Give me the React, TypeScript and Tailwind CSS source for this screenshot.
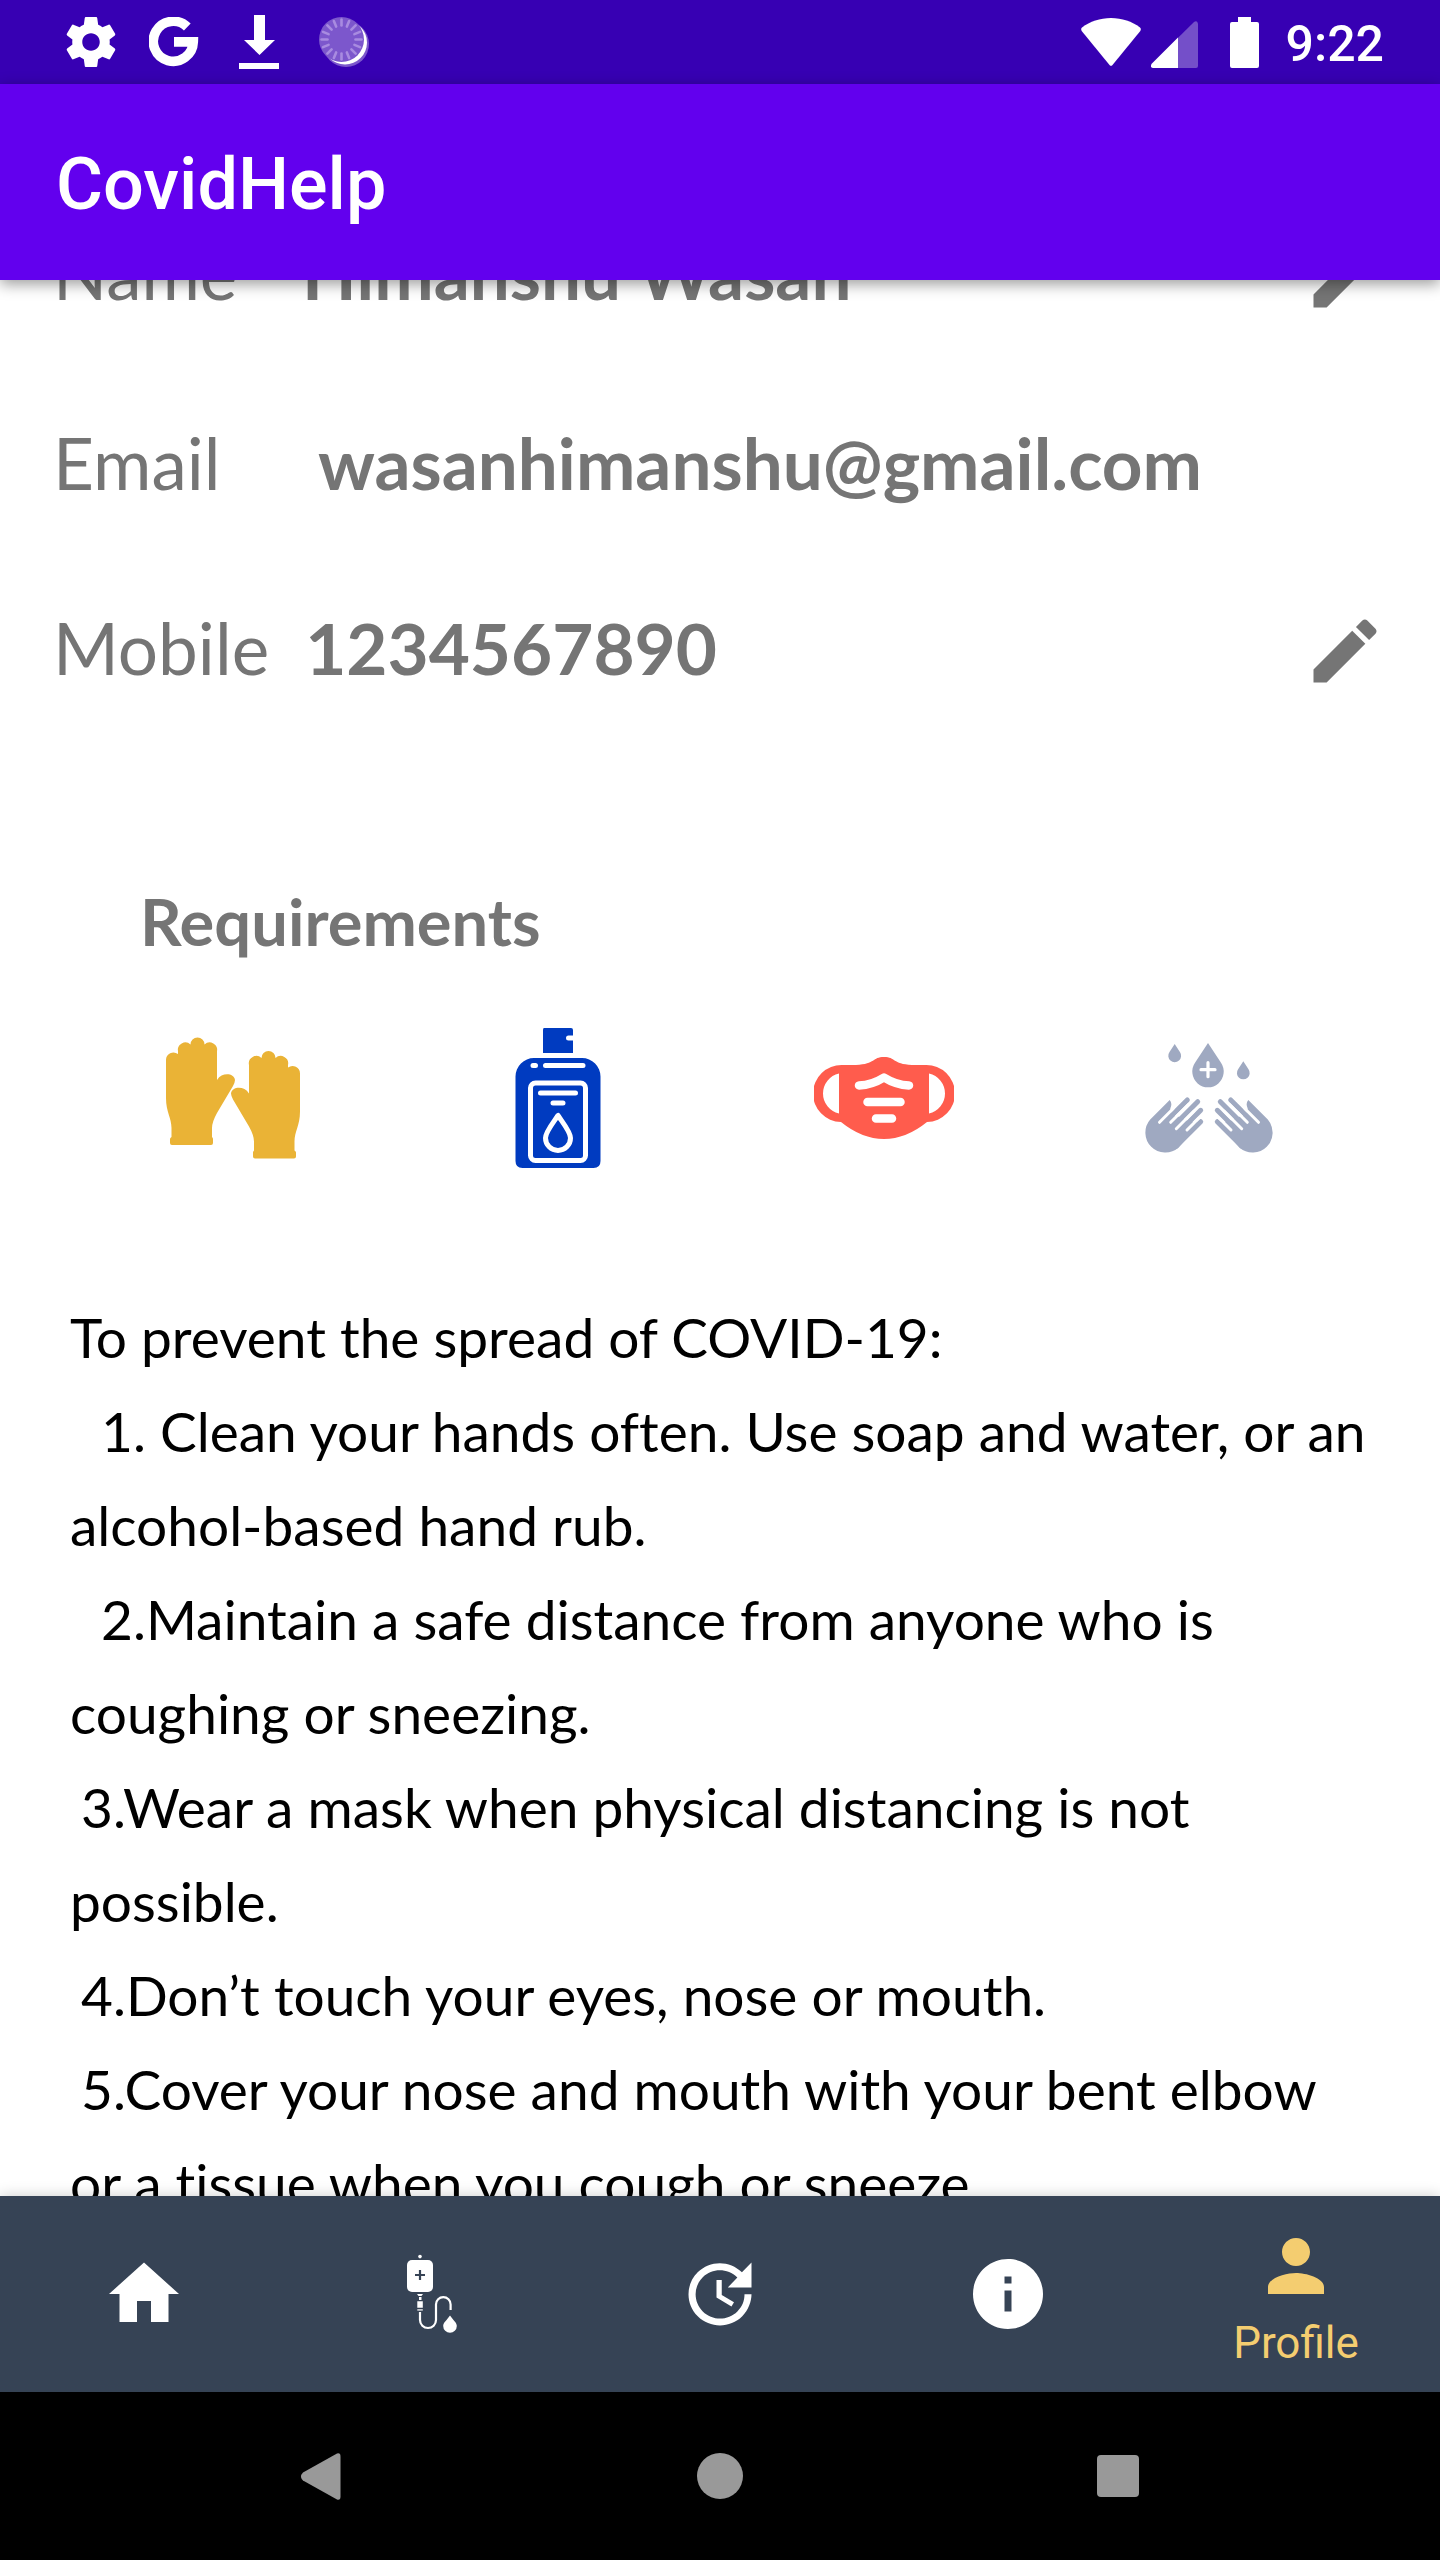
import React from "react";

type IconProps = { className?: string };

const material = (d: string) =>
  function Icon({ className }: IconProps) {
    return (
      <svg viewBox="0 0 24 24" fill="currentColor" aria-hidden="true" className={className}>
        <path d={d} />
      </svg>
    );
  };

const GearIcon = material(
  "M19.43 12.98c.04-.32.07-.64.07-.98s-.03-.66-.07-.98l2.11-1.65c.19-.15.24-.42.12-.64l-2-3.46c-.12-.22-.39-.3-.61-.22l-2.49 1c-.52-.4-1.08-.73-1.69-.98l-.38-2.65C14.46 2.18 14.25 2 14 2h-4c-.25 0-.46.18-.49.42l-.38 2.65c-.61.25-1.17.59-1.69.98l-2.49-1c-.23-.09-.49 0-.61.22l-2 3.46c-.13.22-.07.49.12.64l2.11 1.65c-.04.32-.07.65-.07.98s.03.66.07.98l-2.11 1.65c-.19.15-.24.42-.12.64l2 3.46c.12.22.39.3.61.22l2.49-1c.52.4 1.08.73 1.69.98l.38 2.65c.03.24.24.42.49.42h4c.25 0 .46-.18.49-.42l.38-2.65c.61-.25 1.17-.59 1.69-.98l2.49 1c.23.09.49 0 .61-.22l2-3.46c.12-.22.07-.49-.12-.64l-2.11-1.65zM12 15.5c-1.93 0-3.5-1.57-3.5-3.5s1.57-3.5 3.5-3.5 3.5 1.57 3.5 3.5-1.57 3.5-3.5 3.5z",
);
const PencilIcon = material(
  "M3 17.25V21h3.75L17.81 9.94l-3.75-3.75L3 17.25zM20.71 7.04c.39-.39.39-1.02 0-1.41l-2.34-2.34c-.39-.39-1.02-.39-1.41 0l-1.83 1.83 3.75 3.75 1.83-1.83z",
);
const HomeIcon = material("M10 20v-6h4v6h5v-8h3L12 3 2 12h3v8z");
const UpdateIcon = material(
  "M21 10.12h-6.78l2.74-2.82c-2.73-2.7-7.15-2.8-9.88-.1-2.73 2.71-2.73 7.08 0 9.79s7.15 2.71 9.88 0C18.32 15.65 19 14.08 19 12.1h2c0 1.98-.88 4.55-2.64 6.29-3.51 3.48-9.21 3.48-12.72 0-3.5-3.47-3.53-9.11-.02-12.58s9.14-3.47 12.65 0L21 3v7.12zM12.5 8v4.25l3.5 2.08-.72 1.21L11 13V8h1.5z",
);
const InfoIcon = material(
  "M12 2C6.48 2 2 6.48 2 12s4.48 10 10 10 10-4.48 10-10S17.52 2 12 2zm1 15h-2v-6h2v6zm0-8h-2V7h2v2z",
);
const PersonIcon = material(
  "M12 12c2.21 0 4-1.79 4-4s-1.79-4-4-4-4 1.79-4 4 1.79 4 4 4zm0 2c-2.67 0-8 1.34-8 4v2h16v-2c0-2.66-5.33-4-8-4z",
);

function GoogleIcon({ className }: IconProps) {
  return (
    <svg viewBox="0 0 50 50" fill="none" aria-hidden="true" className={className}>
      <path d="M38.3 10 A20 20 0 1 0 44.3 24.9 H25" stroke="white" strokeWidth="9.6" />
    </svg>
  );
}

function DownloadIcon({ className }: IconProps) {
  return (
    <svg viewBox="0 0 40 54" fill="white" aria-hidden="true" className={className}>
      <path d="M15 0h11v25h10L20.500 40 5 25h10zM0 48h40v6H0z" />
    </svg>
  );
}

function SpinnerIcon({ className }: IconProps) {
  const ticks = Array.from({ length: 16 }, (_, i) => i * 22.5);
  return (
    <svg viewBox="0 0 50 50" aria-hidden="true" className={className}>
      <circle cx="27" cy="27" r="23" fill="#7C57CC" />
      <circle cx="26" cy="25.500" r="22" fill="white" />
      <circle cx="22.500" cy="22.500" r="22.500" fill="#7C57CC" />
      {ticks.map((angle) => (
        <path
          key={angle}
          d="M22.500 2.500v6"
          stroke="#A88BE0"
          strokeWidth="2.600"
          strokeLinecap="round"
          transform={`rotate(${angle} 22.500 22.500)`}
        />
      ))}
    </svg>
  );
}

function WifiIcon({ className }: IconProps) {
  return (
    <svg viewBox="0 0 60 48" fill="white" aria-hidden="true" className={className}>
      <path d="M1 9.500C9 3.500 19 0 30 0s21 3.500 29 9.500q1.500 1.500.3 3.500L31.500 47q-1.500 1.700-3 0L.7 13Q-.5 11 1 9.500z" />
    </svg>
  );
}

function SignalIcon({ className }: IconProps) {
  return (
    <svg viewBox="0 -4 47 51" aria-hidden="true" className={className}>
      <path d="M2 47q-3.500-1-1-4.500L43 1q3-2 4 1.500V45q0 2-2 2z" fill="#744FC9" />
      <path d="M2 47q-3.500-1-1-4.500L27 16.500V47z" fill="white" />
    </svg>
  );
}

function BatteryIcon({ className }: IconProps) {
  return (
    <svg viewBox="0 0 29 51" fill="white" aria-hidden="true" className={className}>
      <path d="M8 0h13v5h6q2 0 2 2v42q0 2-2 2H2q-2 0-2-2V7q0-2 2-2h6z" />
    </svg>
  );
}

function GlovesIcon({ className }: IconProps) {
  return (
    <svg viewBox="0 8 140 140" fill="#EAB336" aria-hidden="true" className={className}>
      <path d="M3 40a7.500 7.500 0 0 1 12-6V31.500a7.500 7.500 0 0 1 12.500-7a7 7 0 0 1 14 0A7.500 7.500 0 0 1 54 31.500V60C59 52 71 53 72 60Q72 62 70 66L54 93Q49 102 49 108V117Q50 118 50 119V123Q50 125 48 125H9Q7 125 7 123V119Q7 118 8.500 117V108C8.500 98 3 92 3 78z" />
      <path d="M137 53.500a7.500 7.500 0 0 0-12-6V45a7.500 7.500 0 0 0-12.500-7a7 7 0 0 0-14 0A7.500 7.500 0 0 0 86 45V73.500C81 65.500 69 66.500 68 73.500Q68 75.500 70 79.500L86 106.500Q91 115.500 91 121.500V130.500Q90 131.500 90 132.500V136.500Q90 138.500 92 138.500H131Q133 138.500 133 136.500V132.500Q133 131.500 131.500 130.500V121.500C131.500 111.500 137 105.500 137 91.500z" />
    </svg>
  );
}

function SanitizerIcon({ className }: IconProps) {
  return (
    <svg viewBox="-13 0 140 140" aria-hidden="true" className={className}>
      <g fill="#003BC0">
        <path d="M43 0H70Q72 0 72 2V7.500H67.500a2.500 2.500 0 0 0 0 5H72V25H42V2Q42 0 43 0z" />
        <path d="M33 30H81A18.500 18.500 0 0 1 99.500 48.500V133Q99.500 140 92.500 140H21.500Q14.500 140 14.500 133V48.500A18.500 18.500 0 0 1 33 30z" />
      </g>
      <g fill="none" stroke="white" strokeWidth="5" strokeLinecap="round" strokeLinejoin="round">
        <path d="M32 37.500h2.500M44.500 37.500H82M39.500 65H74.500M52 75H62" />
        <rect x="29.500" y="55" width="55" height="77.500" rx="5" />
        <path d="M57 87.500C52 95 44.500 104 44.500 110a12.500 12.500 0 0 0 25 0C69.500 104 62 95 57 87.500z" />
      </g>
    </svg>
  );
}

function MaskIcon({ className }: IconProps) {
  return (
    <svg viewBox="0 0 140 140" aria-hidden="true" className={className}>
      <path
        fill="#FF5C4D"
        d="M28 37H42C62 36 58 29 70 29S78 36 98 37H112A28.500 28.500 0 0 1 113 94Q92 111 70 111T27 94A28.500 28.500 0 0 1 28 37z"
      />
      <path fill="white" d="M25 45.500V85.500A20.500 20.500 0 0 1 25 45.500zM115 45.500V85.500A20.500 20.500 0 0 0 115 45.500z" />
      <path
        fill="none"
        stroke="white"
        strokeWidth="8.500"
        strokeLinecap="round"
        strokeLinejoin="round"
        d="M45 57.500Q58 57 70 49.500Q82 57 95 57.500M53.500 74H86.500M62 90.500H78"
      />
    </svg>
  );
}

function WashHand() {
  return (
    <>
      <path
        fill="#9FA9C1"
        d="M11.200 76.600L30.700 57Q33.700 60.500 31.300 65.500L33 72L43 74.400L50 79L61.700 78.700L39.400 104.800A20 20 0 0 1 11.200 76.600z"
      />
      <path
        stroke="#9FA9C1"
        strokeWidth="5"
        strokeLinecap="round"
        d="M48.300 57L27 78.300M58.700 58.700L33 84.400M61.700 67.300L40 89M61.700 78.700L37.400 103"
      />
      <path
        stroke="white"
        strokeWidth="3"
        strokeLinecap="round"
        d="M20.500 79.300L34 65.800M31.700 79.300L50 61M37.300 85.700L55 68M48 87L60 75"
      />
    </>
  );
}

function WashIcon({ className }: IconProps) {
  return (
    <svg viewBox="0 -15 140 140" aria-hidden="true" className={className}>
      <g fill="#9FA9C1">
        <path d="M69 0L82 19.800A15.700 15.700 0 1 1 56 19.800z" />
        <path d="M35.700 1L40.900 9A6.400 6.400 0 1 1 30.500 9z" />
        <path d="M104.300 18.200L109.500 26.200A6.400 6.400 0 1 1 99.100 26.200z" />
      </g>
      <path d="M69 19.700v14M62 26.700h14" stroke="white" strokeWidth="3.200" strokeLinecap="round" />
      <WashHand />
      <g transform="matrix(-1 0 0 1 140 0)">
        <WashHand />
      </g>
    </svg>
  );
}

function DripIcon({ className }: IconProps) {
  return (
    <svg viewBox="0 0 84 84" aria-hidden="true" className={className}>
      <g fill="white">
        <circle cx="30" cy="4.600" r="1.800" />
        <rect x="17" y="8" width="26" height="32" rx="5" />
        <path d="M27 42h6l-1.500 2h-3zM29 45h2.500v3H29zM27.300 49.300h5.500v6.500h-5.500z" />
        <path d="M27.300 57h5.500v1.800h-5.500z" opacity="0.700" />
        <path d="M60 63.500c3 4.500 6.800 7 6.800 10.500a6.800 6.800 0 0 1-13.600 0c0-3.500 3.800-6 6.800-10.500z" />
      </g>
      <path d="M30 18v10M25 23h10" stroke="#364355" strokeWidth="2.200" />
      <path d="M30 60V68a8 8 0 0 0 16 0V52.500a7.300 7.300 0 0 1 14.600 0v5.500" stroke="white" strokeWidth="2.200" fill="none" />
    </svg>
  );
}

type RowProps = { label: string; value: string; editable?: boolean; first?: boolean };

function ProfileRow({ label, value, editable, first }: RowProps) {
  return (
    <div
      className={`flex h-[185px] items-center px-[53px] text-[71px] leading-[84px] text-[#757575] ${first ? "mb-[5px]" : ""}`}
    >
      <dt className="min-w-[249px] pr-9">{label}</dt>
      <dd className={editable ? "flex-1 font-bold" : "flex-1 pl-4 font-bold"}>{value}</dd>
      {editable && (
        <button type="button" aria-label={`Edit ${label}`} className="pt-1.5">
          <PencilIcon className="size-21" />
        </button>
      )}
    </div>
  );
}

const advice = [
  { indent: "indent-0", text: "To prevent the spread of COVID-19:" },
  { indent: "indent-[31px]", text: "1. Clean your hands often. Use soap and water, or an alcohol-based hand rub." },
  { indent: "indent-[31px]", text: "2.Maintain a safe distance from anyone who is coughing or sneezing." },
  { indent: "indent-[11px]", text: "3.Wear a mask when physical distancing is not possible." },
  { indent: "indent-[11px]", text: "4.Don’t touch your eyes, nose or mouth." },
  { indent: "indent-[11px]", text: "5.Cover your nose and mouth with your bent elbow or a tissue when you cough or sneeze." },
];

const tabs = [
  { name: "Home", Icon: HomeIcon },
  { name: "Blood", Icon: DripIcon },
  { name: "Updates", Icon: UpdateIcon },
  { name: "Info", Icon: InfoIcon },
];

export default function App() {
  return (
    <div className="flex h-screen flex-col overflow-hidden bg-white font-['Lato',sans-serif]">
      <div className="flex h-21 shrink-0 items-center justify-between bg-[#3700B3] pr-14 pl-[65px] text-white">
        <div className="flex items-center gap-8">
          <GearIcon className="-mx-1 size-[60px]" />
          <GoogleIcon className="size-[50px]" />
          <DownloadIcon className="mx-2 h-[54px] w-10" />
          <SpinnerIcon className="size-[50px]" />
        </div>
        <div className="flex items-center">
          <WifiIcon className="h-12 w-[60px]" />
          <SignalIcon className="ml-[10px] h-[51px] w-[47px]" />
          <BatteryIcon className="ml-8 h-[51px] w-[29px]" />
          <span className="ml-[27px] pt-1 font-['Roboto',sans-serif] text-[50px] leading-[60px] font-medium">9:22</span>
        </div>
      </div>

      <header className="z-10 flex h-49 shrink-0 items-center bg-[#6200EE] px-14 shadow-[0_4px_14px_rgba(0,0,0,0.4)]">
        <h1 className="pt-1.5 font-['Roboto',sans-serif] text-[72px] leading-[84px] font-medium text-white">CovidHelp</h1>
      </header>

      <main className="min-h-0 flex-1 overflow-hidden">
        <dl className="-mt-[100px]">
          <ProfileRow label="Name" value="Himanshu Wasan" editable first />
          <ProfileRow label="Email" value="wasanhimanshu@gmail.com" />
          <ProfileRow label="Mobile" value="1234567890" editable />
        </dl>

        <section className="pt-[143px]">
          <h2 className="px-[140px] text-[65px] leading-[76px] font-bold text-[#757575]">Requirements</h2>
          <div className="flex justify-between pt-[69px] pr-[161px] pl-[163px]">
            <GlovesIcon className="size-[140px]" />
            <SanitizerIcon className="size-[140px]" />
            <MaskIcon className="size-[140px]" />
            <WashIcon className="size-[140px]" />
          </div>
        </section>

        <section className="px-[70px] pt-[122px] text-[55px] leading-[94px] text-black [font-variant-ligatures:none]">
          {advice.map(({ indent, text }) => (
            <p key={text} className={indent}>
              {text}
            </p>
          ))}
        </section>
      </main>

      <nav className="z-10 grid h-49 shrink-0 grid-cols-5 bg-[#364355] text-white shadow-[0_0_14px_rgba(0,0,0,0.2)]">
        {tabs.map(({ name, Icon }) => (
          <button key={name} type="button" aria-label={name} className="flex items-center justify-center">
            <Icon className="size-21" />
          </button>
        ))}
        <button type="button" className="flex flex-col items-center gap-[10px] pt-7 text-[#F4CD70]">
          <PersonIcon className="size-21" />
          <span className="font-['Roboto',sans-serif] text-[44px] leading-[50px]">Profile</span>
        </button>
      </nav>

      <div className="flex h-42 shrink-0 items-center justify-center gap-[314px] bg-black text-[#999999]">
        <button type="button" aria-label="Back">
          <svg viewBox="0 0 84 84" fill="currentColor" className="size-21">
            <path d="M23 38.500L57 19.500q3.500-1 3.500 3v40q0 4-3.500 3L23 46.500q-4-4 0-8z" />
          </svg>
        </button>
        <button type="button" aria-label="Home screen">
          <svg viewBox="0 0 84 84" fill="currentColor" className="size-21">
            <circle cx="42" cy="42" r="23" />
          </svg>
        </button>
        <button type="button" aria-label="Recent apps">
          <svg viewBox="0 0 84 84" fill="currentColor" className="size-21">
            <rect x="21" y="21" width="42" height="42" rx="4" />
          </svg>
        </button>
      </div>
    </div>
  );
}
